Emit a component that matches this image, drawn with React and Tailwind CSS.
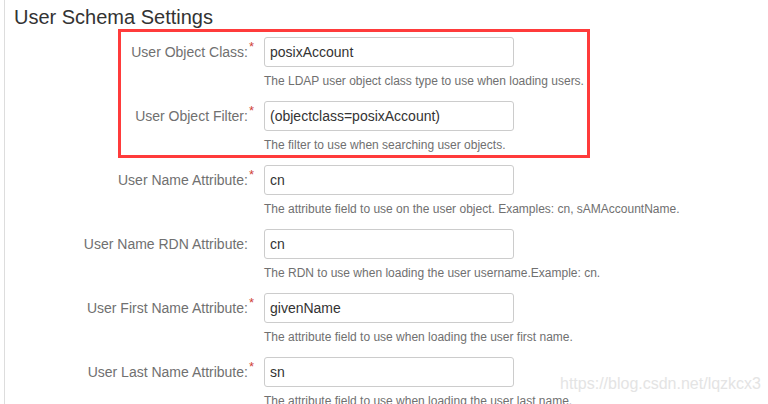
const FIELDS = [
  {
    label: 'User Object Class:',
    required: true,
    value: 'posixAccount',
    help: 'The LDAP user object class type to use when loading users.',
  },
  {
    label: 'User Object Filter:',
    required: true,
    value: '(objectclass=posixAccount)',
    help: 'The filter to use when searching user objects.',
  },
  {
    label: 'User Name Attribute:',
    required: true,
    value: 'cn',
    help: 'The attribute field to use on the user object. Examples: cn, sAMAccountName.',
  },
  {
    label: 'User Name RDN Attribute:',
    required: false,
    value: 'cn',
    help: 'The RDN to use when loading the user username.Example: cn.',
  },
  {
    label: 'User First Name Attribute:',
    required: true,
    value: 'givenName',
    help: 'The attribute field to use when loading the user first name.',
  },
  {
    label: 'User Last Name Attribute:',
    required: true,
    value: 'sn',
    help: 'The attribute field to use when loading the user last name.',
  },
];

function FieldRow({ field }) {
  return (
    <div className="flex items-start gap-[10px] pb-[12px]">
      <div className="flex h-[30px] w-[240px] shrink-0 items-center justify-end">
        <span className={`text-[14px] text-[#707070] ${field.required ? '' : 'pr-[6px]'}`}>
          {field.label}
        </span>
        {field.required && (
          <span className="ml-[1px] -mt-[12px] text-[13px] leading-none text-[#d04437]">*</span>
        )}
      </div>
      <div className="flex flex-col">
        <input
          readOnly
          value={field.value}
          className="h-[30px] w-[250px] rounded-[3px] border border-[#cccccc] bg-white px-[5px] text-[14px] text-[#333333] outline-none"
        />
        <div className="mt-[6px] h-[16px] text-[12px] leading-[16px] text-[#707070] whitespace-nowrap">
          {field.help}
        </div>
      </div>
    </div>
  );
}

export default function App() {
  return (
    <div
      className="relative h-[404px] w-[768px] overflow-hidden bg-white"
      style={{ fontFamily: '"Liberation Sans", Arial, sans-serif' }}
    >
      <div className="ml-[4px] h-full border-l border-[#dddddd] pl-[9px]">
        <h2 className="pt-[5px] text-[20px] leading-[24px] text-[#333333]">User Schema Settings</h2>
        <div className="mt-[8px]">
          {FIELDS.map((f) => (
            <FieldRow key={f.label} field={f} />
          ))}
        </div>
      </div>

      {/* annotation box drawn over the first two fields */}
      <div className="pointer-events-none absolute left-[118px] top-[29px] h-[129px] w-[472px] border-[3px] border-[#ff3b3b]" />

      {/* watermark */}
      <div className="pointer-events-none absolute left-[560px] top-[375px] text-[16px] leading-[18px] text-[#e4e4e4]">
        https://blog.csdn.net/lqzkcx3
      </div>
    </div>
  );
}
